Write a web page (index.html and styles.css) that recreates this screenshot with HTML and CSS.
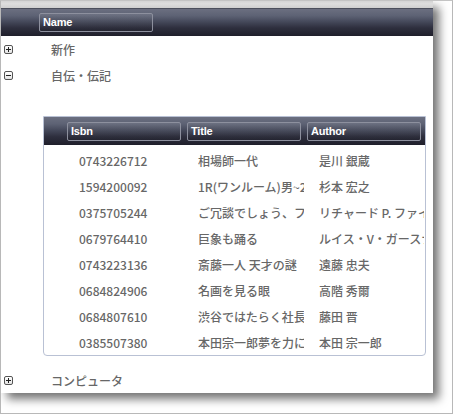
FILE: index.html
```html
<!DOCTYPE html>
<html>
<head>
<meta charset="utf-8">
<link rel="stylesheet" href="styles.css">
</head>
<body>
<div class="frame">
  <div class="panel">
    <div class="topstrip"></div>
    <div class="header tree-cols">
      <div></div>
      <div class="hcell"><span class="hbtn">Name</span></div>
    </div>
    <div class="trow tree-cols">
      <div class="exp"><span class="box plus"></span></div>
      <div class="tcell">新作</div>
    </div>
    <div class="trow tree-cols">
      <div class="exp"><span class="box minus"></span></div>
      <div class="tcell">自伝・伝記</div>
    </div>
    <div class="detail">
      <div class="grid">
        <div class="header ghead grid-cols">
          <div></div>
          <div class="hcell"><span class="hbtn">Isbn</span></div>
          <div class="hcell"><span class="hbtn">Title</span></div>
          <div class="hcell"><span class="hbtn">Author</span></div>
        </div>
        <div class="gbody">
          <div class="grow grid-cols"><div></div><div class="c">0743226712</div><div class="c">相場師一代</div><div class="c">是川 銀蔵</div></div>
          <div class="grow grid-cols"><div></div><div class="c">1594200092</div><div class="c">1R(ワンルーム)男~28歳</div><div class="c">杉本 宏之</div></div>
          <div class="grow grid-cols"><div></div><div class="c">0375705244</div><div class="c">ご冗談でしょう、ファインマンさん</div><div class="c">リチャード P. ファインマン</div></div>
          <div class="grow grid-cols"><div></div><div class="c">0679764410</div><div class="c">巨象も踊る</div><div class="c">ルイス・V・ガースナー</div></div>
          <div class="grow grid-cols"><div></div><div class="c">0743223136</div><div class="c">斎藤一人 天才の謎</div><div class="c">遠藤 忠夫</div></div>
          <div class="grow grid-cols"><div></div><div class="c">0684824906</div><div class="c">名画を見る眼</div><div class="c">高階 秀爾</div></div>
          <div class="grow grid-cols"><div></div><div class="c">0684807610</div><div class="c">渋谷ではたらく社長の告白</div><div class="c">藤田 晋</div></div>
          <div class="grow grid-cols"><div></div><div class="c">0385507380</div><div class="c">本田宗一郎夢を力に</div><div class="c">本田 宗一郎</div></div>
        </div>
      </div>
    </div>
    <div class="trow tree-cols">
      <div class="exp"><span class="box plus"></span></div>
      <div class="tcell">コンピュータ</div>
    </div>
  </div>
</div>
</body>
</html>
```

FILE: styles.css
```css
html, body {
  margin: 0;
  padding: 0;
  background: #fff;
}
.frame {
  width: 453px;
  height: 414px;
  box-sizing: border-box;
  border: 1px solid #b8b8b8;
  border-top-color: #c4c4c4;
  background: #fff;
  overflow: hidden;
}
.panel {
  width: 432px;
  height: 392px;
  background: #fff;
  box-shadow: 6px 6px 9px rgba(0, 0, 0, 0.55);
  font-family: "Noto Sans CJK JP", "Noto Sans", sans-serif;
  font-size: 12px;
  font-weight: 500;
  color: #676767;
  overflow: hidden;
}
.topstrip {
  height: 7px;
  background: linear-gradient(#d4d4d4, #dedede 40%, #cfcfcf);
}
.header {
  height: 28px;
  box-sizing: border-box;
  border-top: 1px solid #4c4f5c;
  background: linear-gradient(#6b6f80 0%, #5d6274 25%, #474b5d 45%, #2e2f3e 70%, #1f1f2b 100%);
  align-items: center;
}
.tree-cols {
  display: grid;
  grid-template-columns: 35px 120px;
}
.grid-cols {
  display: grid;
  grid-template-columns: 20px 120px 120px 120px;
}
.hcell {
  padding: 0 3px;
  display: flex;
}
.hbtn {
  flex: 1;
  height: 19px;
  box-sizing: border-box;
  border: 1px solid #8d909e;
  border-radius: 2px;
  background: linear-gradient(rgba(255,255,255,0.08), rgba(0,0,0,0.1));
  color: #fff;
  font-family: "Liberation Sans", Arial, sans-serif;
  font-weight: bold;
  font-size: 11px;
  line-height: 17px;
  padding-left: 3px;
  letter-spacing: -0.2px;
}
.trow {
  height: 26px;
  align-items: center;
}
.exp {
  display: flex;
  align-items: center;
  padding-left: 3px;
}
.box {
  position: relative;
  width: 9px;
  height: 9px;
  box-sizing: border-box;
  border: 1px solid #555;
  border-radius: 2px;
  background: linear-gradient(#fff, #e4e4e4);
}
.box::before {
  content: "";
  position: absolute;
  left: 1px;
  top: 3px;
  width: 5px;
  height: 1px;
  background: #222;
}
.box.plus::after {
  content: "";
  position: absolute;
  left: 3px;
  top: 1px;
  width: 1px;
  height: 5px;
  background: #222;
}
.tcell {
  padding-left: 15px;
  white-space: nowrap;
}
.detail {
  padding: 28px 7px 11px 42px;
}
.grid {
  height: 240px;
  box-sizing: border-box;
  border: 1px solid #b9c1d4;
  border-radius: 0 0 4px 4px;
  overflow: hidden;
}
.ghead {
  border-top: none;
}
.gbody {
  padding-top: 2px;
}
.grow {
  height: 26px;
  align-items: center;
}
.c {
  padding-left: 15px;
  padding-right: 5px;
  white-space: nowrap;
  overflow: hidden;
}
.c:nth-child(3) {
  padding-left: 14px;
  padding-right: 6px;
}
```
